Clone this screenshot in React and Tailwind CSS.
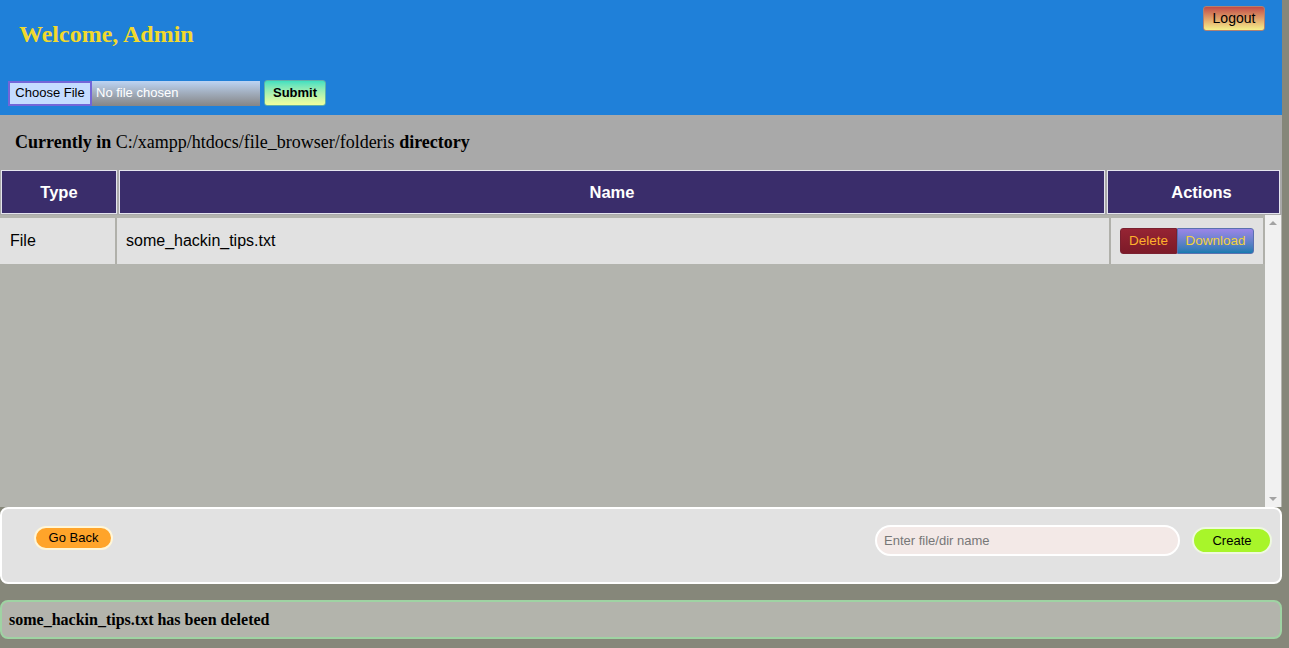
export default function App() {
  const rows = [{ type: 'File', name: 'some_hackin_tips.txt' }];

  return (
    <div className="min-h-[648px] w-full bg-[#86877a] font-['Liberation_Sans',Arial,sans-serif]">
      <div className="w-[1282px]">
        {/* header */}
        <div className="h-[115px] bg-[#1f80d9] flex flex-col">
          <div className="flex items-start justify-between">
            <h1 className="mt-[20px] ml-[19px] font-['Liberation_Serif','Times_New_Roman',serif] font-bold text-[24px] leading-[28px] text-[#f2d92c]">
              Welcome, Admin
            </h1>
            <button className="mt-[6px] mr-[17px] w-[62px] h-[25px] rounded-[3px] border border-[#b08070] bg-gradient-to-b from-[#c04a48] to-[#f4f08a] text-[14px] text-black">
              Logout
            </button>
          </div>
          <div className="mt-[32px] ml-[8px] flex items-center gap-[4px]">
            <div className="flex w-[252px] h-[25px] bg-gradient-to-b from-[#bcd4f4] to-[#858585]">
              <span className="h-full w-[84px] flex items-center justify-center bg-[#c4dcff] border-2 border-[#7366d8] text-[13px] text-black">
                Choose File
              </span>
              <span className="flex items-center pl-[4px] text-[13px] text-white">No file chosen</span>
            </div>
            <button className="w-[62px] h-[26px] rounded-[3px] border border-[#5fb0a8] bg-gradient-to-b from-[#3ee0c0] to-[#f2ff9c] text-[13px] font-bold text-black">
              Submit
            </button>
          </div>
        </div>

        {/* current dir */}
        <div className="h-[54px] bg-[#a9a9a9] flex items-center pl-[15px] font-['Liberation_Serif','Times_New_Roman',serif] text-[18px] text-black">
          <b>Currently in</b>&nbsp;C:/xampp/htdocs/file_browser/folderis&nbsp;<b>directory</b>
        </div>

        {/* table header */}
        <div className="bg-[#a9a9a9] pt-px pb-px pl-px pr-[3px] grid grid-cols-[116px_986px_173px] gap-[2px]">
          {['Type', 'Name', 'Actions'].map((h) => (
            <div
              key={h}
              className={`h-[44px] bg-[#3a2d6b] border border-[#e4e4ee] flex items-center justify-center text-white font-bold text-[16.5px] ${h === 'Actions' ? 'pl-[16px]' : ''}`}
            >
              {h}
            </div>
          ))}
        </div>

        {/* table body */}
        <div className="h-[292px] bg-[#b3b4ae] flex">
          <div className="flex-1 pt-[3px]">
            {rows.map((r) => (
              <div key={r.name} className="grid grid-cols-[115px_992px_152px] gap-[2px] bg-[#b0b0aa]">
                <div className="h-[46px] bg-[#e1e1e1] flex items-center pl-[10px] text-[16px] text-black">{r.type}</div>
                <div className="h-[46px] bg-[#e1e1e1] flex items-center pl-[9px] text-[16px] text-black">{r.name}</div>
                <div className="h-[46px] bg-[#e1e1e1] flex items-center pl-[9px]">
                  <button className="w-[57px] h-[26px] rounded-l-[3px] bg-gradient-to-b from-[#962433] to-[#7c1a28] text-[13.5px] text-[#ffb02c] border border-[#7a2030]">
                    Delete
                  </button>
                  <button className="w-[77px] h-[26px] rounded-r-[3px] bg-gradient-to-b from-[#9a86e8] to-[#127ab0] text-[13.5px] text-[#f2d23c] border border-[#5a70b0]">
                    Download
                  </button>
                </div>
              </div>
            ))}
          </div>
          <div className="w-[16px] bg-[#f1f1f1] flex flex-col justify-between items-center py-[6px] mr-px">
            <div className="w-0 h-0 border-l-[4px] border-r-[4px] border-b-[4px] border-l-transparent border-r-transparent border-b-[#a3a3a3]" />
            <div className="w-0 h-0 border-l-[4px] border-r-[4px] border-t-[4px] border-l-transparent border-r-transparent border-t-[#a3a3a3]" />
          </div>
        </div>

        {/* bottom panel */}
        <div className="h-[77px] bg-[#e2e2e2] border-2 border-white rounded-[8px] flex items-start justify-between">
          <button className="mt-[17px] ml-[32px] w-[79px] h-[24px] rounded-full bg-[#ffa42a] border-2 border-[#fff6d8] text-[13px] text-black">
            Go Back
          </button>
          <div className="mt-[16px] mr-[8px] flex items-center gap-[12px]">
            <input
              placeholder="Enter file/dir name"
              className="w-[305px] h-[31px] rounded-full bg-[#f3e9e7] border-2 border-white pl-[7px] text-[13px] placeholder:text-[#777] outline-none"
            />
            <button className="w-[80px] h-[27px] rounded-full bg-[#a8f52a] border-2 border-[#eef8e0] text-[13px] text-black">
              Create
            </button>
          </div>
        </div>

        {/* message */}
        <div className="mt-[16px] h-[39px] w-[1282px] bg-[#b3b4ac] border-2 border-[#9fd3a3] rounded-[8px] flex items-center pl-[7px] font-['Liberation_Serif','Times_New_Roman',serif] font-bold text-[16px] text-black">
          some_hackin_tips.txt has been deleted
        </div>
      </div>
    </div>
  );
}
